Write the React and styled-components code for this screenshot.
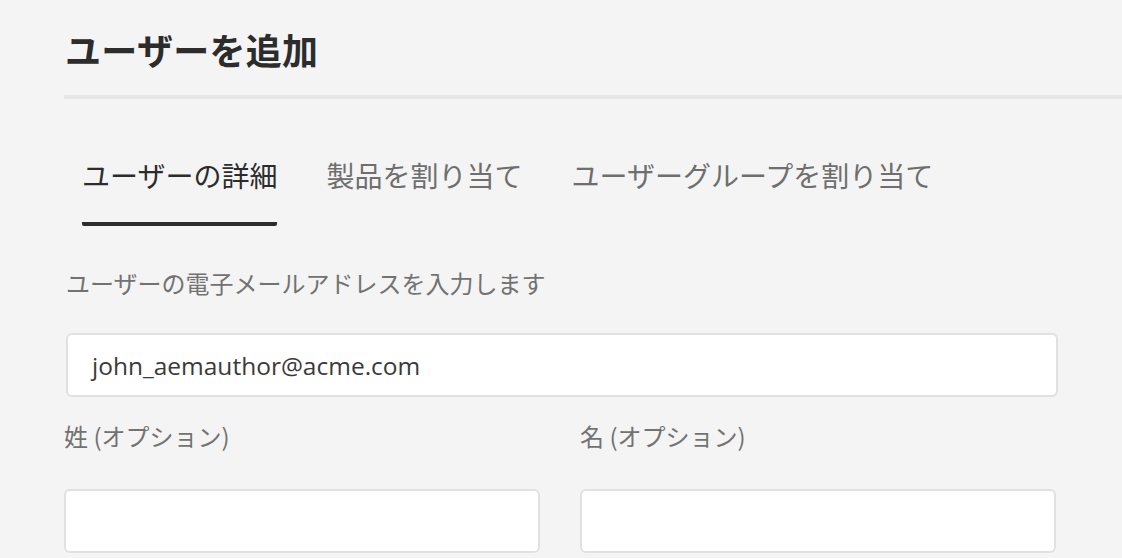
import React from "react";
import styled, { createGlobalStyle } from "styled-components";

const Global = createGlobalStyle`
  html, body { margin: 0; padding: 0; background: #f4f4f4; }
  body { font-family: "Noto Sans CJK JP", "Noto Sans", sans-serif; overflow: hidden; }
  * { box-sizing: border-box; }
`;

const Page = styled.div`
  width: 1122px;
  height: 558px;
  padding-left: 64px;
  background: #f4f4f4;
`;

const Header = styled.header`
  padding-top: 24px;
  height: 99px;
  border-bottom: 4px solid #e6e6e6;
`;

const Title = styled.h1`
  margin: 0;
  padding-left: 1px;
  font-size: 36px;
  line-height: 50px;
  font-weight: 700;
  letter-spacing: 0.3px;
  color: #2c2c2c;
`;

const TabList = styled.nav`
  display: flex;
  gap: 49px;
  padding-left: 18px;
  margin-top: 56px;
`;

const Tab = styled.div`
  font-size: 28px;
  line-height: 40px;
  color: ${(p) => (p.$active ? "#2c2c2c" : "#6e6e6e")};
  padding-bottom: 27px;
  border-bottom: 4px solid ${(p) => (p.$active ? "#2c2c2c" : "transparent")};
  border-radius: 2px;
`;

const Form = styled.div`
  padding-top: 40px;
  width: 994px;
`;

const Label = styled.div`
  font-size: 24px;
  line-height: 34px;
  color: #727272;
  padding-left: ${(p) => p.$indent || 0}px;
`;

const Input = styled.div`
  height: 64px;
  background: #ffffff;
  border: 2px solid #e1e1e1;
  border-radius: 6px;
  display: flex;
  align-items: center;
  padding-left: 24px;
  font-family: "Open Sans", "Noto Sans", sans-serif;
  font-size: 24.5px;
  color: #3a3a3a;
`;

const EmailField = styled.div`
  margin-top: 33px;
  margin-left: 2px;
`;

const Row = styled.div`
  display: grid;
  grid-template-columns: 476px 476px;
  column-gap: 40px;
  margin-top: 22px;
`;

const Field = styled.div`
  display: flex;
  flex-direction: column;
  gap: 36px;
`;

export default function App() {
  return (
    <Page>
      <Global />
      <Header>
        <Title>ユーザーを追加</Title>
      </Header>
      <TabList>
        <Tab $active>ユーザーの詳細</Tab>
        <Tab>製品を割り当て</Tab>
        <Tab>ユーザーグループを割り当て</Tab>
      </TabList>
      <Form>
        <Label $indent={2}>ユーザーの電子メールアドレスを入力します</Label>
        <EmailField>
          <Input>john_aemauthor@acme.com</Input>
        </EmailField>
        <Row>
          <Field>
            <Label>姓 (オプション)</Label>
            <Input />
          </Field>
          <Field>
            <Label>名 (オプション)</Label>
            <Input />
          </Field>
        </Row>
      </Form>
    </Page>
  );
}
